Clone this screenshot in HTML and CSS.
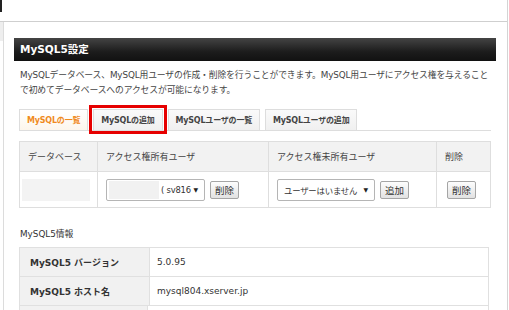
FILE: index.html
```html
<!DOCTYPE html>
<html lang="ja">
<head>
  <meta charset="UTF-8" />
  <title>MySQL5設定</title>
  <link rel="stylesheet" href="styles.css">
</head>
<body>

  <div class="page">
    <div class="topbar"><span class="mark"></span></div>

    <div class="frame">
      <div class="side-edge"></div>
      <div class="content">
        <h1 class="heading">MySQL5設定</h1>

        <div class="section">
          <p class="lead">MySQLデータベース、MySQL用ユーザの作成・削除を行うことができます。MySQL用ユーザにアクセス権を与えることで初めてデータベースへのアクセスが可能になります。</p>

          <ul class="tabs">
            <li class="tab active">MySQLの一覧</li>
            <li class="tab marked">MySQLの追加</li>
            <li class="tab">MySQLユーザの一覧</li>
            <li class="tab">MySQLユーザの追加</li>
          </ul>

          <table class="db-table">
            <tr>
              <th class="c-db">データベース</th>
              <th class="c-own">アクセス権所有ユーザ</th>
              <th class="c-none">アクセス権未所有ユーザ</th>
              <th class="c-del">削除</th>
            </tr>
            <tr>
              <td class="c-db"><span class="blur-box"></span></td>
              <td class="c-own">
                <span class="select wide">
                  <span class="blur-name"></span>
                  <span class="sel-text">( sv816</span>
                  <span class="arrow">▼</span>
                </span>
                <button class="btn">削除</button>
              </td>
              <td class="c-none">
                <span class="select">
                  <span class="sel-text">ユーザーはいません</span>
                  <span class="arrow">▼</span>
                </span>
                <button class="btn">追加</button>
              </td>
              <td class="c-del"><button class="btn">削除</button></td>
            </tr>
          </table>

          <h2 class="sub">MySQL5情報</h2>

          <table class="info-table">
            <tr>
              <th>MySQL5 バージョン</th>
              <td>5.0.95</td>
            </tr>
            <tr>
              <th>MySQL5 ホスト名</th>
              <td>mysql804.xserver.jp</td>
            </tr>
          </table>
          <div class="info-more"><span class="more-label"></span></div>
        </div>
      </div>
    </div>
  </div>

</body>
</html>
```

FILE: styles.css
```css
html, body {
  margin: 0;
  padding: 0;
  background-color: #fff;
  font-family: "DejaVu Sans", "Noto Sans CJK JP", sans-serif;
  color: #333;
}
.page {
  width: 507px;
  height: 310px;
  overflow: hidden;
  border-right: 1px solid #d4d4d4;
}
.topbar {
  height: 21px;
  border-bottom: 1px solid #cfcfcf;
}
.mark {
  display: block;
  width: 2px;
  height: 12px;
  background-color: #222;
}
.frame {
  display: flex;
  height: 288px;
}
.side-edge {
  width: 3px;
  height: 19px;
  background-color: #eee;
  flex: none;
}
.content {
  flex: 1;
  border-left: 1px solid #dcdcdc;
  padding: 16px 12px 0 10px;
}
.heading {
  margin: 0;
  height: 23px;
  line-height: 23px;
  padding-left: 6px;
  font-size: 10.5px;
  font-weight: bold;
  color: #fff;
  background: linear-gradient(#444, #1c1c1c 60%, #111);
}
.section {
  padding: 0 5px;
}
.lead {
  margin: 7px 0 0 1px;
  font-size: 8.8px;
  letter-spacing: -0.12px;
  line-height: 15px;
  color: #444;
}
.tabs {
  list-style: none;
  margin: 11px 0 0;
  padding: 0;
  display: flex;
  gap: 5px;
  border-bottom: 1px solid #ddd;
}
.tab {
  height: 20px;
  line-height: 21px;
  padding: 0 7px;
  border: 1px solid #ddd;
  border-bottom: none;
  background: linear-gradient(#fafafa, #f0f0f0);
  font-size: 8px;
  letter-spacing: -0.2px;
  font-weight: bold;
  color: #444;
}
.tab.active {
  background: linear-gradient(#fff, #fdf6ec);
  color: #f08a1c;
}
.tab.marked {
  outline: 3px solid #e60000;
  outline-offset: 1px;
}
.db-table, .info-table {
  width: 471px;
  border-collapse: collapse;
  table-layout: fixed;
  font-size: 9px;
}
.db-table {
  margin-top: 10px;
}
.db-table th, .db-table td {
  border: 1px solid #dedede;
  text-align: left;
  padding: 0 0 0 8px;
  white-space: nowrap;
}
.db-table th {
  height: 29px;
  background-color: #f2f2f2;
  font-weight: normal;
  color: #444;
}
.db-table td {
  height: 35px;
}
.c-db { width: 69px; }
.c-own { width: 162px; }
.c-none { width: 159px; }
.c-del { width: 45px; }
.db-table td.c-db {
  padding-left: 2px;
}
.blur-box {
  display: block;
  width: 68px;
  height: 22px;
  background-color: #f3f3f3;
}
.select {
  display: inline-flex;
  align-items: center;
  gap: 4px;
  height: 22px;
  border: 1px solid #b5b5b5;
  border-radius: 2px;
  background-color: #fff;
  vertical-align: middle;
  padding: 0 6px 0 6px;
  box-sizing: border-box;
  width: 98px;
}
.select.wide {
  width: 99px;
  padding-left: 2px;
  gap: 0;
}
.blur-name {
  width: 50px;
  height: 18px;
  background-color: #f1f1f1;
  margin-right: 2px;
}
.sel-text {
  flex: 1;
  font-size: 8.4px;
  letter-spacing: -0.2px;
  color: #333;
}
.arrow {
  font-size: 6px;
  color: #222;
}
.btn {
  vertical-align: middle;
  margin-left: 2px;
  height: 18px;
  padding: 0 4px;
  font-family: "DejaVu Sans", "Noto Sans CJK JP", sans-serif;
  font-size: 9.5px;
  color: #333;
  background: linear-gradient(#fdfdfd, #e2e2e2);
  border: 1px solid #a5a5a5;
  border-radius: 2px;
}
.sub {
  margin: 19px 0 0 1px;
  font-size: 8.8px;
  line-height: 14px;
  font-weight: normal;
  color: #333;
}
.info-table {
  margin-top: 6px;
  width: 470px;
}
.info-table th, .info-table td {
  border: 1px solid #e0e0e0;
  height: 26px;
  text-align: left;
  white-space: nowrap;
}
.info-table th {
  width: 118px;
  padding-left: 10px;
  background-color: #f1f1f1;
  font-weight: bold;
  color: #333;
}
.info-table td {
  padding-left: 7px;
  color: #333;
}
.info-more {
  display: flex;
  width: 468px;
  height: 20px;
  border: 1px solid #e0e0e0;
  border-top: none;
}
.more-label {
  width: 127px;
  background-color: #f1f1f1;
  border-right: 1px solid #e0e0e0;
}
```
